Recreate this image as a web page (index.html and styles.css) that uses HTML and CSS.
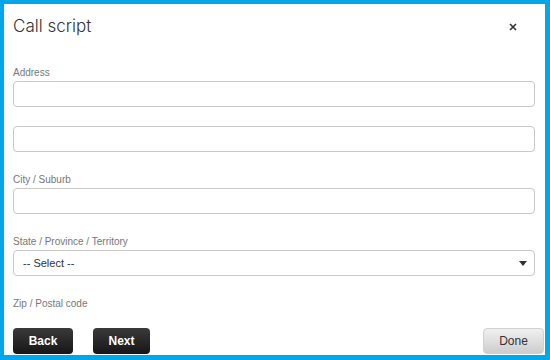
FILE: index.html
```html
<!DOCTYPE html>
<html>
<head>
    <meta charset='utf-8'>
    <title>Call script</title>
    <link rel="stylesheet" href="styles.css">
</head>
<body>
    <div class="dialog">
        <div class="header">
            <h1 class="title">Call script</h1>
            <span class="close">
                <svg width="8" height="8" viewBox="0 0 8 8"><path d="M1 1L7 7M7 1L1 7" stroke="#333" stroke-width="1.6"/></svg>
            </span>
        </div>
        <div class="form">
            <div class="field first">
                <label>Address</label>
                <input type="text">
                <input type="text" class="second">
            </div>
            <div class="field">
                <label>City / Suburb</label>
                <input type="text">
            </div>
            <div class="field">
                <label>State / Province / Territory</label>
                <div class="select">
                    <span>-- Select --</span>
                    <svg width="8" height="5" viewBox="0 0 8 5"><path d="M0 0H8L4 5Z" fill="#333"/></svg>
                </div>
            </div>
            <div class="field">
                <label>Zip / Postal code</label>
            </div>
        </div>
        <div class="footer">
            <button class="btn dark">Back</button>
            <button class="btn dark">Next</button>
            <button class="btn light">Done</button>
        </div>
    </div>
</body>
</html>
```
FILE: styles.css
```css
* {
    margin: 0;
    padding: 0;
    box-sizing: border-box;
}

body {
    background: #03a6e8;
    font-family: "Liberation Sans", Arial, sans-serif;
    width: 550px;
    height: 360px;
    padding: 4px 5px 5px 4px;
}

.dialog {
    background: #fff;
    height: 351px;
    display: flex;
    flex-direction: column;
}

.header {
    display: flex;
    align-items: center;
    justify-content: space-between;
    padding: 8px 28px 0 9px;
    height: 36px;
}
.title {
    font-family: Inter, sans-serif;
    font-size: 17px;
    font-weight: 300;
    color: #333;
    line-height: 22px;
}
.close {
    display: flex;
    margin-top: 1px;
}

.form {
    padding: 0 10px 0 9px;
}
.field {
    display: flex;
    flex-direction: column;
    margin-top: 22px;
}
.field.first {
    margin-top: 27px;
}
.field label {
    font-size: 10px;
    line-height: 12px;
    color: #777;
    margin-bottom: 2px;
}
.field input,
.select {
    height: 26px;
    border: 1px solid #c8c8c8;
    border-radius: 4px;
    outline: 0;
    background: #fff;
}
.field input.second {
    margin-top: 19px;
}
.select {
    display: flex;
    align-items: center;
    justify-content: space-between;
    padding: 0 7px 0 9px;
    font-size: 11px;
    color: #333;
}

.footer {
    margin-top: auto;
    display: flex;
    padding: 0 1px 1px 9px;
}
.btn {
    height: 26px;
    border: 0;
    border-radius: 4px;
    font-family: "Liberation Sans", Arial, sans-serif;
    font-size: 12px;
    cursor: pointer;
}
.btn.dark {
    width: 60px;
    margin-right: 20px;
    background: linear-gradient(#3a3a3a, #161616);
    color: #fff;
    font-weight: bold;
}
.btn.dark + .btn.dark {
    width: 57px;
}
.btn.light {
    width: 61px;
    margin-left: auto;
    background: linear-gradient(#f0f0f0, #cdcdcd);
    border: 1px solid #d0d0d0;
    color: #333;
}
```
